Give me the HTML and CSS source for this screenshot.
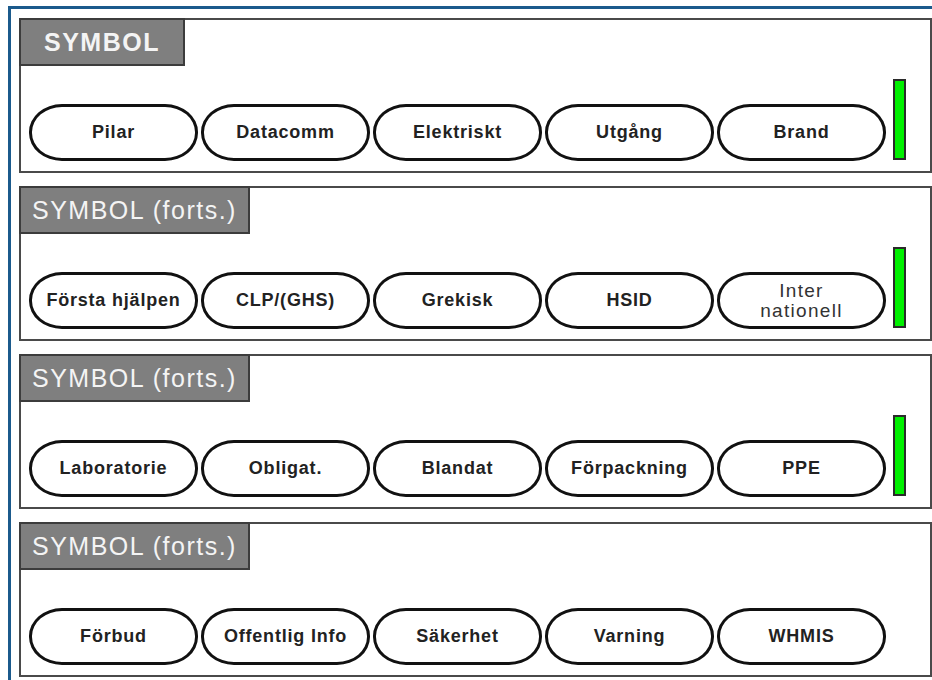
FILE: index.html
```html
<!DOCTYPE html>
<html lang="sv">
<head>
    <meta charset="UTF-8">
    <meta name="viewport" content="width=device-width, initial-scale=1.0">
    <title>Symbol</title>
    <link rel="stylesheet" href="styles.css">
</head>
<body>
    <div class="frame">
        <div class="panel">
            <div class="tab tab-first"><span class="tab-bold">SYMBOL</span></div>
            <div class="row">
                <div class="pills">
                    <div class="pill">Pilar</div>
                    <div class="pill">Datacomm</div>
                    <div class="pill">Elektriskt</div>
                    <div class="pill">Utgång</div>
                    <div class="pill">Brand</div>
                </div>
                <div class="level"></div>
            </div>
        </div>

        <div class="panel">
            <div class="tab">SYMBOL (forts.)</div>
            <div class="row">
                <div class="pills">
                    <div class="pill">Första hjälpen</div>
                    <div class="pill">CLP/(GHS)</div>
                    <div class="pill">Grekisk</div>
                    <div class="pill">HSID</div>
                    <div class="pill pill-light">Inter<br>nationell</div>
                </div>
                <div class="level"></div>
            </div>
        </div>

        <div class="panel">
            <div class="tab">SYMBOL (forts.)</div>
            <div class="row">
                <div class="pills">
                    <div class="pill">Laboratorie</div>
                    <div class="pill">Obligat.</div>
                    <div class="pill">Blandat</div>
                    <div class="pill">Förpackning</div>
                    <div class="pill">PPE</div>
                </div>
                <div class="level"></div>
            </div>
        </div>

        <div class="panel">
            <div class="tab">SYMBOL (forts.)</div>
            <div class="row">
                <div class="pills">
                    <div class="pill">Förbud</div>
                    <div class="pill">Offentlig Info</div>
                    <div class="pill">Säkerhet</div>
                    <div class="pill">Varning</div>
                    <div class="pill">WHMIS</div>
                </div>
            </div>
        </div>
    </div>
</body>
</html>
```

FILE: styles.css
```css
body {
    margin: 0;
    background: #fff;
    font-family: "Liberation Sans", Arial, sans-serif;
    overflow: hidden;
}
.frame {
    box-sizing: border-box;
    height: calc(100vh - 6px);
    margin: 6px 0 0 8px;
    padding: 9px 0 0 8px;
    border-top: 3px solid #1b5a8c;
    border-left: 3px solid #1b5a8c;
    display: flex;
    flex-direction: column;
    gap: 13px;
}
.panel {
    flex: none;
    height: 155px;
    box-sizing: border-box;
    border: 2px solid #4a4a4a;
    background: #fff;
    display: flex;
    flex-direction: column;
}
.tab {
    align-self: flex-start;
    height: 48px;
    min-width: 166px;
    box-sizing: border-box;
    margin: -2px 0 0 -2px;
    padding: 0 11px;
    background: #7f7f7f;
    border: 2px solid #3c3c3c;
    color: #f4f4f4;
    font-size: 25px;
    letter-spacing: 1.5px;
    display: flex;
    align-items: center;
    justify-content: center;
}
.tab-bold {
    font-weight: bold;
}
.row {
    flex: 1;
    display: flex;
    align-items: flex-end;
    gap: 7px;
    padding: 0 0 10px 8px;
}
.pills {
    display: flex;
    gap: 3px;
}
.pill {
    width: 169px;
    height: 57px;
    box-sizing: border-box;
    border: 3px solid #111;
    border-radius: 33px / 28px;
    display: flex;
    align-items: center;
    justify-content: center;
    text-align: center;
    color: #222;
    font-size: 18px;
    font-weight: bold;
    letter-spacing: 0.8px;
}
.pill-light {
    font-weight: normal;
    color: #333;
    font-size: 19px;
    line-height: 20px;
    letter-spacing: 1.3px;
}
.level {
    width: 13px;
    height: 81px;
    box-sizing: border-box;
    margin-bottom: 1px;
    background: #00f000;
    border: 2px solid #2a2a2a;
}
```
